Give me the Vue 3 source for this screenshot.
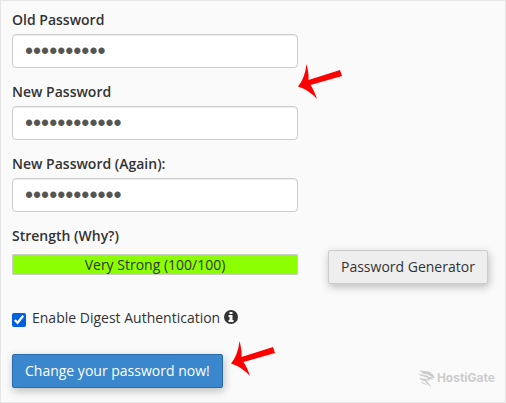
<script setup>
import { reactive, ref } from 'vue'

const fields = reactive([
  { id: 'old-password', label: 'Old Password', value: 'abcdefghij', auto: 'current-password' },
  { id: 'new-password', label: 'New Password', value: 'abcdefghijkl', auto: 'new-password' },
  { id: 'new-password-again', label: 'New Password (Again):', value: 'abcdefghijkl', auto: 'new-password' },
])
const strength = ref(100)
const digest = ref(true)
const arrowPath = 'M0 22.5 Q7 14 8.5 0 Q11 9 10.5 16 L42 6 L44 12 L12.5 21 Q16 26 19 35 Q11 26 0 22.5 Z'
</script>

<template>
  <main class="panel">
    <form class="form" @submit.prevent>
      <div class="fields">
        <div v-for="field in fields" :key="field.id" class="field">
          <label :for="field.id">{{ field.label }}</label>
          <input :id="field.id" v-model="field.value" type="password" :autocomplete="field.auto" />
        </div>
        <svg class="arrow arrow-fields" viewBox="0 0 44 36" aria-hidden="true">
          <path :d="arrowPath" />
        </svg>
      </div>

      <div class="strength-row">
        <div class="strength">
          <span class="strength-label">Strength (Why?)</span>
          <div class="meter">
            <div class="meter-fill" :style="{ width: strength + '%' }"></div>
            <span class="meter-text">Very Strong ({{ strength }}/100)</span>
          </div>
        </div>
        <button type="button" class="btn">Password Generator</button>
      </div>

      <div class="digest">
        <input id="digest" v-model="digest" type="checkbox" />
        <label for="digest">Enable Digest Authentication</label>
        <svg class="info" viewBox="0 0 14 14" aria-hidden="true">
          <circle cx="7" cy="7" r="7" fill="#333" />
          <path d="M5.5 2h3v2h-3zM4.5 5h4v5h1v2h-5v-2h1V7h-1z" fill="#fafafa" />
        </svg>
      </div>

      <div class="actions">
        <button type="submit" class="btn btn-primary">Change your password now!</button>
        <svg class="arrow" viewBox="0 0 44 36" aria-hidden="true">
          <path :d="arrowPath" />
        </svg>
        <div class="brand">
          <svg class="brand-mark" viewBox="0 0 18 18" aria-hidden="true">
            <path d="M2 1 C6 3 10 1 13 4 C15 5 16 7 17 9 L15 9 C13 7 9 5 6 5 C4 4 3 3 2 1Z" />
            <path d="M0 4 C4 7 8 5 11 8 L10 9 C7 7 3 9 0 4Z" />
            <path d="M1 8 C4 11 7 8 9 11 C9 14 12 14 13 18 C9 15 8 14 7 12 C5 12 2 11 1 8Z" />
            <path d="M10 8 L13 8 L16 11 L12 10 L11 12 L9 10Z" />
            <path d="M3 12 C5 14 6 13 9 16 C6 15 4 15 3 12Z" />
          </svg>
          <span>HostiGate</span>
        </div>
      </div>
    </form>
  </main>
</template>

<style>
body {
  margin: 0;
  background: #fafafa;
}
</style>

<style scoped>
.panel {
  box-sizing: border-box;
  min-height: 100vh;
  padding: 9px 10px 14px 11px;
  border: 1px solid #e6e6e6;
  background: #fafafa;
  color: #333;
  font: 14px/20px "Open Sans", "Noto Sans", sans-serif;
}
.fields {
  position: relative;
  display: grid;
  gap: 14px;
  max-width: 286px;
}
.field {
  display: grid;
  gap: 4px;
}
.field label,
.strength-label {
  font-weight: 600;
}
.field input {
  box-sizing: border-box;
  width: 100%;
  height: 34px;
  padding: 6px 12px;
  border: 1px solid #ccc;
  border-radius: 4px;
  background: #fff;
  box-shadow: inset 0 1px 1px rgba(0, 0, 0, 0.075);
  color: #555;
  font: 23px/20px "Liberation Sans", sans-serif;
}
.arrow {
  flex: none;
  width: 44px;
  height: 36px;
  fill: #f00;
}
.arrow-fields {
  position: absolute;
  top: 54px;
  left: 100%;
}
.strength-row {
  display: flex;
  align-items: flex-end;
  gap: 30px;
  margin-top: 14px;
}
.strength {
  display: grid;
  flex: 0 1 286px;
  gap: 8px;
  padding-bottom: 9px;
}
.meter {
  position: relative;
  box-sizing: border-box;
  height: 21px;
  border: 1px solid #ccc;
  border-radius: 1px;
  text-align: center;
}
.meter-fill {
  position: absolute;
  inset: 0 auto 0 0;
  background: #8cff00;
}
.meter-text {
  position: relative;
  display: block;
  line-height: 19px;
}
.btn {
  box-sizing: border-box;
  flex: none;
  height: 34px;
  padding: 6px 12px;
  border: 1px solid #ccc;
  border-radius: 2px;
  background: #eee;
  box-shadow: 1px 3px 8px rgba(0, 0, 0, 0.25);
  color: #333;
  font: inherit;
}
.btn-primary {
  border-color: #2a6cab;
  background: #3a87cd;
  color: #fff;
}
.digest {
  display: flex;
  align-items: center;
  gap: 6px;
  margin-top: 24px;
}
.digest label {
  margin-right: -2px;
}
.digest input {
  width: 14px;
  height: 14px;
  margin: 4px 0 0;
  accent-color: #0060df;
}
.info {
  width: 14px;
  height: 14px;
  margin-bottom: 2px;
}
.actions {
  display: flex;
  align-items: flex-end;
  gap: 8px;
  margin-top: 26px;
}
.actions .arrow {
  align-self: flex-start;
  margin-top: -13px;
}
.brand {
  display: flex;
  align-items: center;
  gap: 1px;
  margin-left: auto;
  color: #ccc;
  font: 700 12px/20px Inter, "Open Sans", sans-serif;
}
.brand-mark {
  width: 18px;
  height: 18px;
  fill: #ccc;
}
</style>
